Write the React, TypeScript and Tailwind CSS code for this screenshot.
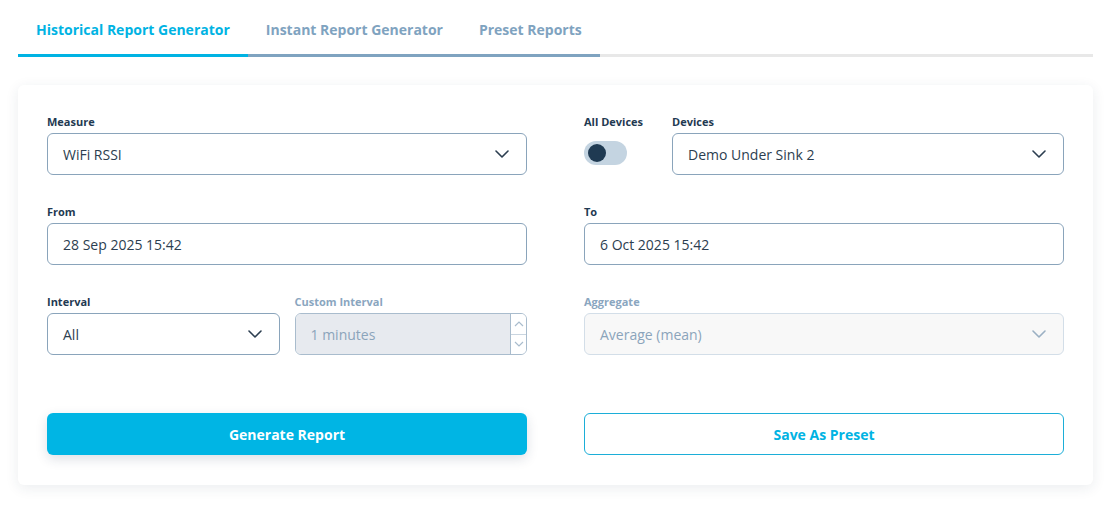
import { useState } from "react";

const font = { fontFamily: "'Open Sans', Lato, sans-serif" };

function Chevron({ className = "" }: { className?: string }) {
  return (
    <svg width="14" height="8" viewBox="0 0 14 8" fill="none" className={className}>
      <path d="M1 1l6 6 6-6" stroke="currentColor" strokeWidth="1.6" strokeLinecap="round" strokeLinejoin="round" />
    </svg>
  );
}

function Label({ children, muted }: { children: React.ReactNode; muted?: boolean }) {
  return (
    <p
      className={`mb-1 whitespace-nowrap text-[11px] font-bold leading-[14px] ${
        muted ? "text-[#8aa6bf]" : "text-[#1f3a52]"
      }`}
    >
      {children}
    </p>
  );
}

function Select({ value, disabled }: { value: string; disabled?: boolean }) {
  return (
    <div
      className={`flex h-[42px] items-center justify-between rounded-md border px-[15px] text-[14px] ${
        disabled
          ? "border-[#d3dee8] bg-[#f8f8f8] text-[#8ba4bb]"
          : "border-[#8aa4bb] bg-white text-[#2c3e50]"
      }`}
    >
      <span>{value}</span>
      <Chevron className={disabled ? "mr-[2px] text-[#9bb0c3]" : "mr-[2px] text-[#2c3e50]"} />
    </div>
  );
}

function TextInput({ value }: { value: string }) {
  return (
    <div className="flex h-[42px] items-center rounded-md border border-[#8aa4bb] bg-white px-[15px] text-[14px] text-[#2c3e50]">
      {value}
    </div>
  );
}

function NumberInput({ value }: { value: string }) {
  return (
    <div className="flex h-[42px] overflow-hidden rounded-md border border-[#a9bccd]">
      <div className="flex flex-1 items-center bg-[#e7eaef] px-[15px] text-[14px] text-[#8ba4bb]">{value}</div>
      <div className="flex w-[16px] flex-col border-l border-[#a9bccd] bg-white">
        <div className="flex flex-1 items-center justify-center border-b border-[#c9d5e0]">
          <svg width="10" height="6" viewBox="0 0 10 6" fill="none">
            <path d="M1 5l4-4 4 4" stroke="#a9bccd" strokeWidth="1.2" />
          </svg>
        </div>
        <div className="flex flex-1 items-center justify-center">
          <svg width="10" height="6" viewBox="0 0 10 6" fill="none">
            <path d="M1 1l4 4 4-4" stroke="#a9bccd" strokeWidth="1.2" />
          </svg>
        </div>
      </div>
    </div>
  );
}

const tabs = ["Historical Report Generator", "Instant Report Generator", "Preset Reports"];

export default function App() {
  const [active, setActive] = useState(0);
  const [allDevices, setAllDevices] = useState(false);

  return (
    <div className="min-h-[506px] w-[1111px] bg-white" style={font}>
      <div className="mx-[18px] flex border-b-[3px] border-[#e8e8e8]">
        {tabs.map((t, i) => (
          <button
            key={t}
            type="button"
            onClick={() => setActive(i)}
            className={`-mb-[3px] border-b-[3px] px-[18px] pt-[20px] pb-[14px] text-[14px] font-bold leading-[20px] ${
              active === i ? "border-[#00b3e3] text-[#00b3e3]" : "border-[#7fa3c0] text-[#7fa3c0]"
            }`}
          >
            {t}
          </button>
        ))}
      </div>

      <div className="mx-[18px] mt-[28px] rounded-md bg-white px-[29px] pt-[30px] pb-[30px] shadow-[0_3px_14px_rgba(30,50,80,0.09)]">
        <div className="grid grid-cols-[480px_480px] gap-x-[57px] gap-y-[30px]">
          <div>
            <Label>Measure</Label>
            <Select value="WiFi RSSI" />
          </div>
          <div className="flex gap-[29px]">
            <div className="w-[59px]">
              <Label>All Devices</Label>
              <button
                type="button"
                onClick={() => setAllDevices(!allDevices)}
                className={`mt-[12px] flex h-[24px] w-[43px] items-center rounded-full bg-[#c4d4e1] px-[4px] ${
                  allDevices ? "justify-end" : "justify-start"
                }`}
              >
                <span className="h-[18px] w-[18px] rounded-full bg-[#1f3a52]" />
              </button>
            </div>
            <div className="flex-1">
              <Label>Devices</Label>
              <Select value="Demo Under Sink 2" />
            </div>
          </div>

          <div>
            <Label>From</Label>
            <TextInput value="28 Sep 2025 15:42" />
          </div>
          <div>
            <Label>To</Label>
            <TextInput value="6 Oct 2025 15:42" />
          </div>

          <div className="flex gap-[15px]">
            <div className="flex-1">
              <Label>Interval</Label>
              <Select value="All" />
            </div>
            <div className="flex-1">
              <Label muted>Custom Interval</Label>
              <NumberInput value="1 minutes" />
            </div>
          </div>
          <div>
            <Label muted>Aggregate</Label>
            <Select value="Average (mean)" disabled />
          </div>
        </div>

        <div className="mt-[58px] grid grid-cols-[480px_480px] gap-x-[57px]">
          <button
            type="button"
            className="h-[42px] rounded-md bg-[#00b5e4] text-[14px] font-bold text-white shadow-[0_4px_12px_rgba(30,50,80,0.15)]"
          >
            Generate Report
          </button>
          <button
            type="button"
            className="h-[42px] rounded-md border border-[#1caed8] bg-white text-[14px] font-bold text-[#00b3e3]"
          >
            Save As Preset
          </button>
        </div>
      </div>
    </div>
  );
}
